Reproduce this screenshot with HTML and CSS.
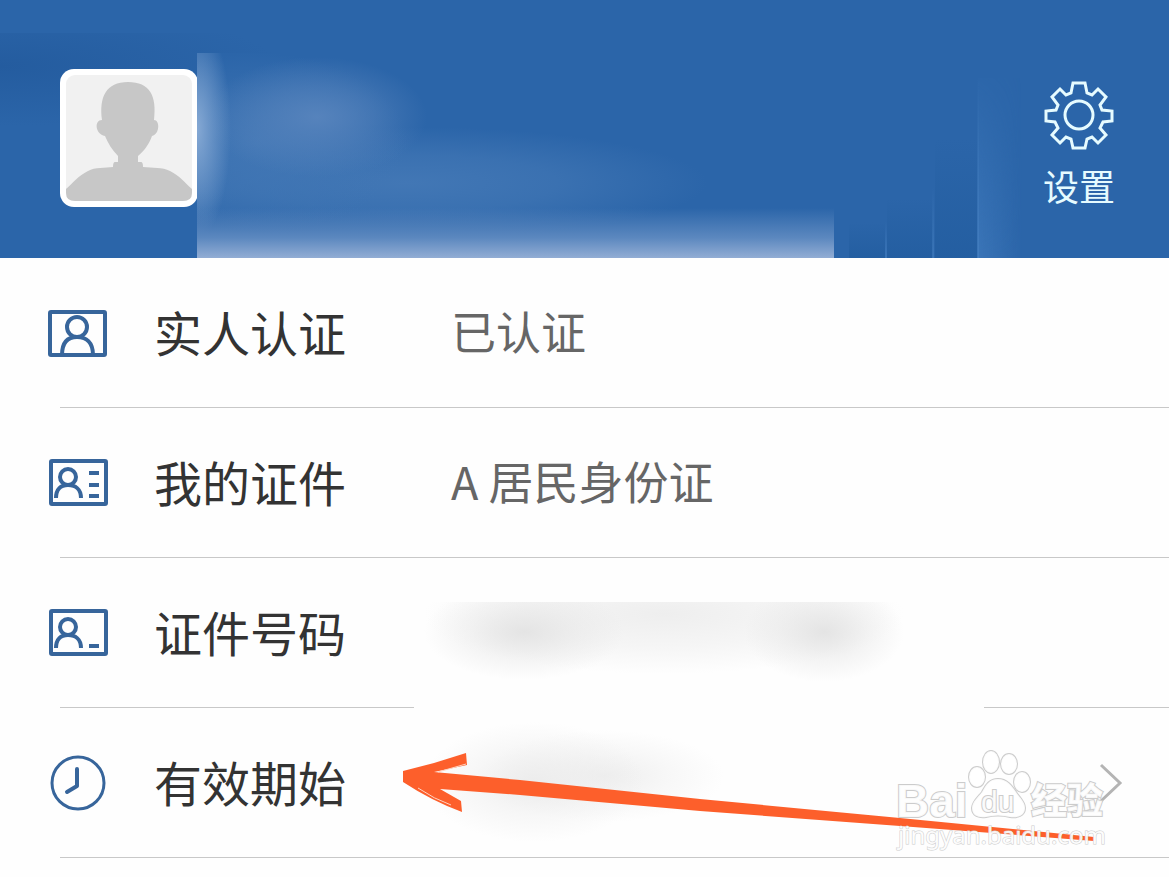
FILE: index.html
```html
<!DOCTYPE html>
<html lang="zh-CN">

<head>
    <meta charset="utf-8" />
    <meta name="viewport" content="width=device-width, initial-scale=1" />
    <title>我的证件</title>
    <link rel="stylesheet" href="styles.css">
</head>

<body>
    <header class="header">
        <svg class="skyline" width="320" height="200" viewBox="0 0 320 200" aria-hidden="true">
            <defs>
                <linearGradient id="tower" x1="0" x2="1" y1="0" y2="0">
                    <stop offset="0" stop-color="#4a85c6" stop-opacity=".5" />
                    <stop offset="1" stop-color="#4a85c6" stop-opacity="0" />
                </linearGradient>
                <linearGradient id="shade" x1="0" x2="0" y1="0" y2="1">
                    <stop offset="0" stop-color="#1f5a9c" stop-opacity="0" />
                    <stop offset="1" stop-color="#1f5a9c" stop-opacity=".6" />
                </linearGradient>
                <linearGradient id="edge" x1="0" x2="0" y1="0" y2="1">
                    <stop offset="0" stop-color="#4a85c6" stop-opacity="0" />
                    <stop offset="1" stop-color="#4a85c6" stop-opacity=".5" />
                </linearGradient>
                <linearGradient id="fade" x1="0" x2="0" y1="0" y2="1">
                    <stop offset="0" stop-color="#000" />
                    <stop offset="1" stop-color="#fff" />
                </linearGradient>
                <mask id="rise"><rect width="320" height="200" fill="url(#fade)" /></mask>
            </defs>
            <rect x="0" y="164" width="36" height="36" fill="url(#shade)" />
            <rect x="38" y="140" width="46" height="60" fill="url(#shade)" />
            <rect x="86" y="80" width="42" height="120" fill="url(#shade)" />
            <rect x="36" y="164" width="2" height="36" fill="url(#edge)" />
            <rect x="83" y="130" width="2" height="70" fill="url(#edge)" />
            <rect x="129" y="20" width="44" height="180" fill="url(#tower)" mask="url(#rise)" />
            <rect x="128" y="20" width="2" height="180" fill="url(#edge)" />
        </svg>

        <svg class="avatar" viewBox="0 0 138 138" role="img" aria-label="头像">
            <rect width="138" height="138" rx="14" fill="#fff" />
            <rect x="6" y="6" width="126" height="126" rx="9" fill="#f1f1f1" />
            <path fill="#c7c7c7" d="M42 51C39 28 46 13 68 13c22 0 29 14 26 38 6 0 6 14-2 16-3 8-7 14-14 20v6h3q2 0 2 5c10 1 19 0 27 4 10 5 14 11 22 18v4q0 8-9 8H15q-9 0-9-8v-4c8-7 12-13 22-18 7-4 17-3 25-4q0-5 2-5h3v-6c-6-6-10-13-13-20-10-2-11-16-3-16z" />
        </svg>
        <div class="user-mask"></div>
        <button class="setting" type="button">
            <svg class="gear" width="70" height="70" viewBox="0 0 70 70" fill="none" stroke="#e6fbff" stroke-width="3" aria-hidden="true">
                <path d="M29 3h12l2 10 5 2 6-6 8 8-6 8 2 5 10 1v10l-9 1-3 6 6 7-8 8-6-6-5 2-2 9H29l-2-9-5-2-6 6-8-8 6-7-3-6-9-1V31l10-1 2-5-6-8 8-8 6 6 5-2z" />
                <circle cx="35" cy="35" r="14" />
            </svg>
            <span>设置</span>
        </button>
    </header>

    <main class="list">
        <div class="row">
            <svg class="icon" width="60" height="50" viewBox="0 0 60 50" aria-hidden="true">
                <rect x="2" y="4" width="55" height="43" rx="1" />
                <circle cx="29" cy="19" r="10" />
                <path d="M14 47C14 34 20 29 29 29s16 5 16 18" />
            </svg>
            <span class="name">实人认证</span>
            <span class="value">已认证</span>
        </div>
        <div class="row">
            <svg class="icon" width="60" height="50" viewBox="0 0 60 50" aria-hidden="true">
                <rect x="3" y="3" width="55" height="43" rx="1" />
                <circle cx="20" cy="19" r="8" />
                <path d="M8 40C8 31 13 27 20 27s13 4 13 13M41 15h10M41 27h10M41 38h10" />
            </svg>
            <span class="name">我的证件</span>
            <span class="value">A 居民身份证</span>
        </div>
        <div class="row">
            <svg class="icon" width="60" height="50" viewBox="0 0 60 50" aria-hidden="true">
                <rect x="3" y="3" width="55" height="43" rx="1" />
                <circle cx="20" cy="19" r="8" />
                <path d="M8 40C8 31 13 27 20 27s13 4 13 13M41 38h10" />
            </svg>
            <span class="name">证件号码</span>
            <div class="number-mask"></div>
        </div>
        <div class="row">
            <svg class="icon" width="60" height="60" viewBox="0 0 60 60" aria-hidden="true">
                <circle cx="30" cy="30" r="26" class="dial" />
                <path d="M29 16v17l-10 6" stroke-linecap="round" stroke-linejoin="round" />
            </svg>
            <span class="name">有效期始</span>
            <div class="date-mask"></div>
            <svg class="more" width="24" height="40" viewBox="0 0 24 40" aria-hidden="true">
                <path d="M2 2l19 18L2 38" />
            </svg>

            <svg class="arrow" width="700" height="100" viewBox="0 0 700 100" aria-hidden="true">
                <path d="M1 22L32 14 64 4l1 12-33 7 86 8 180 19 200 19 194 19v4L498 77 298 62 118 46 38 40l21 12 1 11Q30 52 1 33z" />
                <path class="scratch" d="M36 23l28-8M16 39q16 11 33 17" />
            </svg>

            <svg class="watermark" width="220" height="106" viewBox="0 0 220 106">
                <g class="paw">
                    <ellipse cx="88" cy="37" rx="8" ry="10" />
                    <ellipse cx="102" cy="22" rx="8" ry="11" />
                    <ellipse cx="120" cy="24" rx="8" ry="10" />
                    <ellipse cx="133" cy="42" rx="8" ry="10" />
                    <path d="M109 39c9 0 14 7 18 13s9 10 9 16c0 8-8 10-15 9-8-2-16-2-24 0-7 1-14-1-14-9 0-6 6-11 10-16 4-7 7-13 16-13z" />
                </g>
                <text class="wm-bai" x="7" y="77">Bai</text>
                <text class="wm-du" x="92" y="72">du</text>
                <text class="wm-exp" x="142" y="74">经验</text>
                <text class="wm-url" x="9" y="104">jingyan.baidu.com</text>
            </svg>
        </div>
    </main>
</body>

</html>
```
FILE: styles.css
```css
body {
    margin: 0;
    background-color: #fefefe;
    font-family: "Noto Sans CJK SC", sans-serif;
    color: #333;
    overflow-x: hidden;
}

/* header */
.header {
    position: relative;
    display: flex;
    align-items: flex-start;
    height: 258px;
    background: radial-gradient(ellipse 280px 60px at 0 33px, #245c9f, transparent) 0 33px no-repeat, #2b65a9;
}
.skyline {
    position: absolute;
    right: 0;
    bottom: 0;
}
.avatar {
    flex: none;
    width: 138px;
    height: 138px;
    margin: 69px 0 0 60px;
}
.user-mask {
    flex: 0 1 637px;
    align-self: flex-end;
    height: 205px;
    margin-left: -1px;
    z-index: 1;
    background:
        linear-gradient(to top, #92add4, #5c88bf 20px, transparent 50px),
        radial-gradient(ellipse 34px 110px at 0 76px, #86a9d4, transparent),
        radial-gradient(ellipse 110px 60px at 120px 64px, #5683bc, #5683bc88 50%, transparent),
        radial-gradient(ellipse 150px 90px at 60px 90px, #4277b5, transparent),
        radial-gradient(ellipse 300px 56px at 210px 130px, #4277b5, #4277b5aa 50%, transparent),
        #2b65a9;
}
.setting {
    position: relative;
    display: flex;
    flex-direction: column;
    align-items: center;
    gap: 8px;
    margin: 80px 54px 0 auto;
    padding: 0;
    border: 0;
    background: none;
    color: #e6fbff;
    font: 36px/54px "Noto Sans CJK SC", sans-serif;
}

/* rows */
.row {
    position: relative;
    display: flex;
    align-items: center;
    height: 149px;
    margin-left: 60px;
    border-bottom: 1px solid #c8c8c8;
}
.icon {
    flex: none;
    margin-left: -12px;
    fill: none;
    stroke: #37659b;
    stroke-width: 4;
}
.icon .dial {
    stroke-width: 3;
}
.name {
    flex: none;
    width: 297px;
    margin-left: 46px;
    padding-bottom: 4px;
    font-size: 48px;
    line-height: 72px;
}
.value {
    padding-bottom: 4px;
    font-size: 45px;
    line-height: 72px;
    color: #666;
    white-space: nowrap;
}
.more {
    margin: 0 46px 0 auto;
    fill: none;
    stroke: #b4b4b4;
    stroke-width: 3;
}

/* smudged number and date */
.number-mask {
    position: absolute;
    top: 44px;
    left: 354px;
    width: 570px;
    height: 106px;
    background:
        radial-gradient(ellipse 100px 48px at 110px 30px, #e4e4e4, #e4e4e466 55%, transparent),
        radial-gradient(ellipse 80px 50px at 410px 30px, #e4e4e4, #e4e4e466 55%, transparent),
        radial-gradient(ellipse 240px 60px at 250px 12px, #eee, #eeeeee88 55%, transparent),
        #fefefe;
}
.date-mask {
    position: absolute;
    top: 0;
    left: 354px;
    width: 330px;
    height: 140px;
    background:
        radial-gradient(ellipse 110px 60px at 120px 74px, #ececec, #ececec66 55%, transparent),
        radial-gradient(ellipse 120px 46px at 190px 68px, #eee, #eeeeee66 55%, transparent);
}

/* pointer */
.arrow {
    position: absolute;
    top: 41px;
    left: 342px;
    fill: #fd5f2b;
}
.arrow .scratch {
    fill: none;
    stroke: #ffd2c0;
    stroke-width: 1;
}

/* watermark */
.watermark {
    position: absolute;
    top: 32px;
    right: 60px;
    overflow: visible;
    fill: #fff;
    fill-opacity: .9;
    stroke: #ccc;
    stroke-width: 2;
    paint-order: stroke;
}
.paw {
    stroke-width: 2;
}
.wm-bai {
    font: bold 46px "Liberation Sans", sans-serif;
}
.wm-du {
    font: 30px "Liberation Sans", sans-serif;
}
.wm-exp {
    font: 900 36px "Noto Sans CJK SC", sans-serif;
}
.wm-url {
    font: 24px "Noto Sans", sans-serif;
    stroke-width: 1;
}
```
